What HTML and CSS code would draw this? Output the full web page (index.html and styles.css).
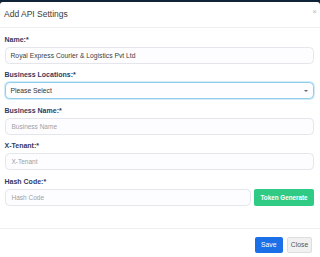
FILE: index.html
```html
<!DOCTYPE html>
<html>
<head>
<meta charset="utf-8">
<link rel="stylesheet" href="styles.css">
</head>
<body>
<div class="modal">
  <div class="modal-header">
    <div class="modal-title">Add API Settings</div>
    <div class="close-x">&times;</div>
  </div>
  <div class="modal-body">
    <div class="group">
      <label class="lbl">Name:*</label>
      <div class="input">Royal Express Courier &amp; Logistics Pvt Ltd</div>
    </div>
    <div class="group">
      <label class="lbl">Business Locations:*</label>
      <div class="input select"><span>Please Select</span><span class="caret"></span></div>
    </div>
    <div class="group">
      <label class="lbl">Business Name:*</label>
      <div class="input ph">Business Name</div>
    </div>
    <div class="group">
      <label class="lbl">X-Tenant:*</label>
      <div class="input ph">X-Tenant</div>
    </div>
    <div class="group">
      <label class="lbl">Hash Code:*</label>
      <div class="row">
        <div class="input ph grow">Hash Code</div>
        <div class="btn btn-green">Token Generate</div>
      </div>
    </div>
  </div>
  <div class="modal-footer">
    <div class="btn btn-blue">Save</div>
    <div class="btn btn-gray">Close</div>
  </div>
</div>
</body>
</html>
```
FILE: styles.css
```css
html, body {
  margin: 0;
  padding: 0;
  height: 100%;
}
body {
  background: #0f2238;
  font-family: "Liberation Sans", Arial, sans-serif;
  overflow: hidden;
}
.modal {
  margin-top: 2px;
  background: #fff;
  border-radius: 3px 3px 0 0;
  height: calc(100% - 2px);
  display: flex;
  flex-direction: column;
}
.modal-header {
  height: 24.5px;
  flex: none;
  border-bottom: 1px solid #eef0f3;
  display: flex;
  align-items: center;
  justify-content: space-between;
  padding: 0 3px 0 4px;
}
.modal-title {
  font-size: 8.5px;
  color: #3b3b3b;
}
.close-x {
  font-size: 8px;
  line-height: 8px;
  color: #b8b8b8;
  margin-top: -5px;
}
.modal-body {
  flex: none;
  box-sizing: border-box;
  height: 201.5px;
  padding: 8px 6px 0 4.5px;
  display: flex;
  flex-direction: column;
  gap: 7.5px;
  border-bottom: 1px solid #eef0f3;
}
.group {
  display: flex;
  flex-direction: column;
  gap: 3px;
}
.lbl {
  font-size: 7px;
  line-height: 8px;
  font-weight: bold;
  color: #34395e;
}
.input {
  height: 17px;
  box-sizing: border-box;
  border: 1px solid #e4e6eb;
  border-radius: 4.5px;
  background: #fdfdff;
  font-size: 6.75px;
  color: #3d3d3d;
  padding: 0 5px;
  display: flex;
  align-items: center;
}
.ph {
  color: #9b9da6;
  font-size: 6.5px;
  padding-left: 6px;
}
.select {
  border-color: #8fcdea;
  box-shadow: 0 0 0 1px #d3ecf7;
  justify-content: space-between;
  color: #333;
  padding-right: 5px;
}
.caret {
  width: 0;
  height: 0;
  border-left: 2px solid transparent;
  border-right: 2px solid transparent;
  border-top: 2.5px solid #666;
}
.row {
  display: flex;
  gap: 3.5px;
}
.grow {
  flex: 1;
}
.btn {
  flex: none;
  height: 16.5px;
  box-sizing: border-box;
  border-radius: 2px;
  font-size: 6.8px;
  display: flex;
  align-items: center;
  justify-content: center;
}
.btn-green {
  width: 60px;
  height: 17px;
  background: #2fcb85;
  color: #fff;
  font-weight: bold;
  font-size: 6.3px;
}
.modal-footer {
  display: flex;
  justify-content: flex-end;
  gap: 4.5px;
  padding: 7.5px 8px 0 0;
}
.btn-blue {
  width: 27.5px;
  background: #1b6fe7;
  color: #fff;
}
.btn-gray {
  width: 25px;
  background: #f1f1f1;
  border: 1px solid #dedede;
  color: #555;
}
```
